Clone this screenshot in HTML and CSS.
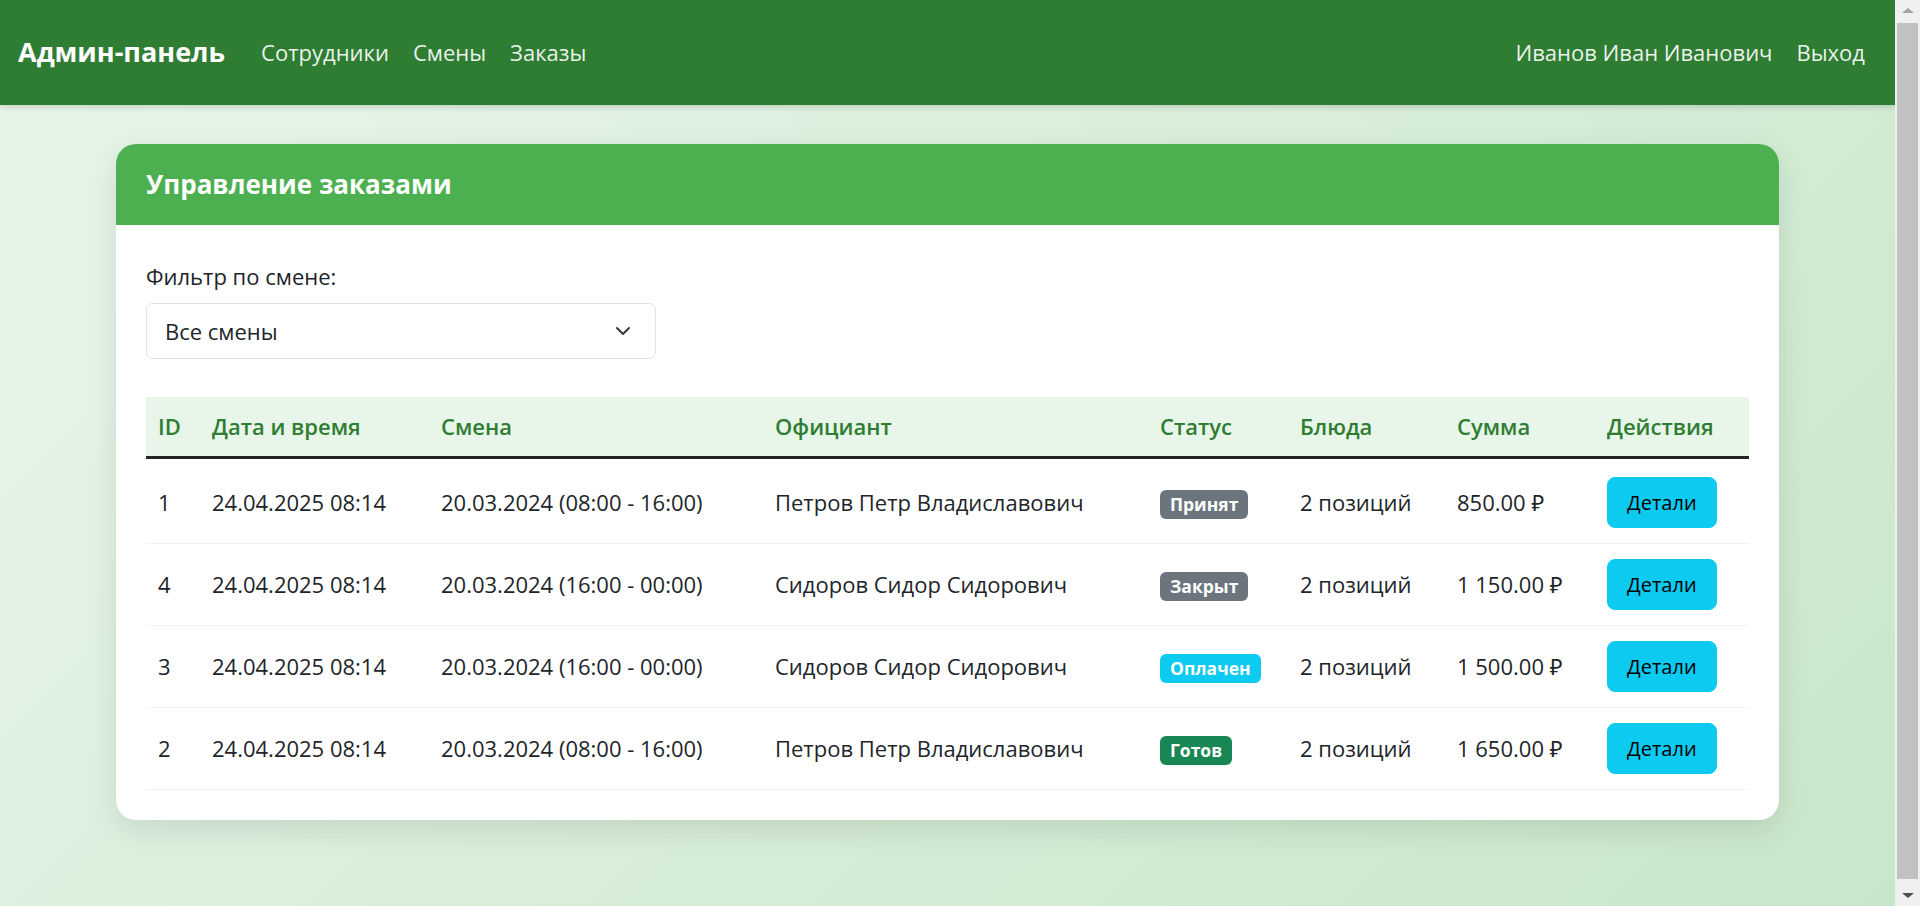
FILE: index.html
```html
<!DOCTYPE html>
<html lang="ru">
<head>
<meta charset="utf-8">
<title>Управление заказами</title>
<link rel="stylesheet" href="styles.css">
</head>
<body>
<div class="page">
  <nav class="navbar">
    <div class="nav-left">
      <a class="brand" href="#">Админ-панель</a>
      <a class="nav-link" href="#">Сотрудники</a>
      <a class="nav-link" href="#">Смены</a>
      <a class="nav-link" href="#">Заказы</a>
    </div>
    <div class="nav-right">
      <span class="nav-link">Иванов Иван Иванович</span>
      <a class="nav-link" href="#">Выход</a>
    </div>
  </nav>
  <main class="main">
    <section class="card">
      <header class="card-header">
        <h5 class="card-title">Управление заказами</h5>
      </header>
      <div class="card-body">
        <div class="filter">
          <label class="filter-label">Фильтр по смене:</label>
          <div class="select">
            <span>Все смены</span>
            <svg class="chevron" width="16" height="16" viewBox="0 0 16 16"><path d="M2 5l6 6 6-6" fill="none" stroke="#343a40" stroke-width="2" stroke-linecap="round" stroke-linejoin="round"/></svg>
          </div>
        </div>
        <table class="orders">
          <colgroup>
            <col class="c-id"><col class="c-date"><col class="c-shift"><col class="c-waiter"><col class="c-status"><col class="c-dishes"><col class="c-sum"><col class="c-act">
          </colgroup>
          <thead>
            <tr><th>ID</th><th>Дата и время</th><th>Смена</th><th>Официант</th><th>Статус</th><th>Блюда</th><th>Сумма</th><th>Действия</th></tr>
          </thead>
          <tbody>
            <tr><td>1</td><td>24.04.2025 08:14</td><td>20.03.2024 (08:00 - 16:00)</td><td>Петров Петр Владиславович</td><td><span class="badge b-gray">Принят</span></td><td>2 позиций</td><td>850.00 ₽</td><td><button class="btn">Детали</button></td></tr>
            <tr><td>4</td><td>24.04.2025 08:14</td><td>20.03.2024 (16:00 - 00:00)</td><td>Сидоров Сидор Сидорович</td><td><span class="badge b-gray">Закрыт</span></td><td>2 позиций</td><td>1 150.00 ₽</td><td><button class="btn">Детали</button></td></tr>
            <tr><td>3</td><td>24.04.2025 08:14</td><td>20.03.2024 (16:00 - 00:00)</td><td>Сидоров Сидор Сидорович</td><td><span class="badge b-info">Оплачен</span></td><td>2 позиций</td><td>1 500.00 ₽</td><td><button class="btn">Детали</button></td></tr>
            <tr><td>2</td><td>24.04.2025 08:14</td><td>20.03.2024 (08:00 - 16:00)</td><td>Петров Петр Владиславович</td><td><span class="badge b-green">Готов</span></td><td>2 позиций</td><td>1 650.00 ₽</td><td><button class="btn">Детали</button></td></tr>
          </tbody>
        </table>
      </div>
    </section>
  </main>
</div>
<div class="scrollbar" aria-hidden="true">
  <div class="sb-arrow sb-up"></div>
  <div class="sb-thumb"></div>
  <div class="sb-arrow sb-down"></div>
</div>
</body>
</html>
```
FILE: styles.css
```css
* { box-sizing: border-box; }
html, body { margin: 0; }
body {
  font-family: "Open Sans", "Noto Sans", sans-serif;
  font-size: 22px;
  line-height: 1.5;
  color: #212529;
  background: linear-gradient(135deg, #e8f5e9 0%, #c8e6c9 100%);
  height: 100vh;
  overflow: hidden;
  display: flex;
}
.page { flex: 1; min-width: 0; }
.scrollbar {
  flex: none;
  width: 25px;
  height: 100vh;
  background: #f0f0f0;
  display: flex;
  flex-direction: column;
  align-items: center;
  padding: 0 2px;
}
.sb-arrow {
  width: 0; height: 0;
  border-left: 6px solid transparent;
  border-right: 6px solid transparent;
  margin: 8px 0;
}
.sb-up { border-bottom: 5px solid #a3a3a3; }
.sb-down { border-top: 5px solid #505050; }
.sb-thumb {
  flex: 1;
  width: 21px;
  background: #c1c1c1;
  margin: 2px 0 6px;
}
.navbar {
  height: 105px;
  background: #2e7d32;
  display: flex;
  align-items: center;
  justify-content: space-between;
  padding: 0 30px 0 18px;
  box-shadow: 0 2px 6px rgba(0,0,0,0.15);
}
.nav-left, .nav-right { display: flex; align-items: center; gap: 24px; }
.brand {
  color: #fff;
  font-size: 27px;
  font-weight: 700;
  text-decoration: none;
  margin-right: 12px;
}
.nav-link {
  color: rgba(255,255,255,0.92);
  text-decoration: none;
  font-size: 22px;
}
.main { padding: 39px 0 40px; }
.card {
  width: 1663px;
  margin: 0 auto;
  background: #fff;
  border-radius: 20px;
  box-shadow: 0 10px 30px rgba(0,0,0,0.1);
  overflow: hidden;
}
.card-header {
  background: #4caf50;
  height: 81px;
  padding: 0 30px;
  display: flex;
  align-items: center;
}
.card-title {
  margin: 0;
  color: #fff;
  font-size: 26px;
  font-weight: 700;
}
.card-body { padding: 35px 30px 30px; }
.filter { margin-bottom: 38px; }
.filter-label { display: block; margin-bottom: 10px; }
.select {
  width: 510px;
  height: 56px;
  border: 1px solid #dee2e6;
  border-radius: 7px;
  display: flex;
  align-items: center;
  justify-content: space-between;
  padding: 0 24px 0 18px;
}
.orders {
  width: 100%;
  border-collapse: collapse;
  table-layout: fixed;
}
.c-id { width: 54px; }
.c-date { width: 229px; }
.c-shift { width: 334px; }
.c-waiter { width: 385px; }
.c-status { width: 140px; }
.c-dishes { width: 157px; }
.c-sum { width: 150px; }
.orders th {
  background: #e8f5e9;
  color: #2e7d32;
  font-weight: 600;
  text-align: left;
  padding: 13px 12px;
  border-bottom: 3px solid #212529;
  white-space: nowrap;
}
.orders td {
  padding: 15px 12px;
  vertical-align: middle;
  border-bottom: 1px solid #eef5ee;
  white-space: nowrap;
}
.orders tbody tr:first-child td { padding-top: 18px; }
.badge {
  display: inline-block;
  color: #fff;
  font-size: 17.5px;
  font-weight: 700;
  line-height: 1;
  padding: 6px 10px;
  border-radius: 6px;
}
.b-gray { background: #6c757d; }
.b-info { background: #0dcaf0; }
.b-green { background: #198754; }
.btn {
  font-family: inherit;
  font-size: 20px;
  line-height: 1;
  height: 51px;
  color: #000;
  background: #0dcaf0;
  border: 1px solid #0dcaf0;
  border-radius: 8px;
  padding: 0 19px;
  cursor: pointer;
}
```
